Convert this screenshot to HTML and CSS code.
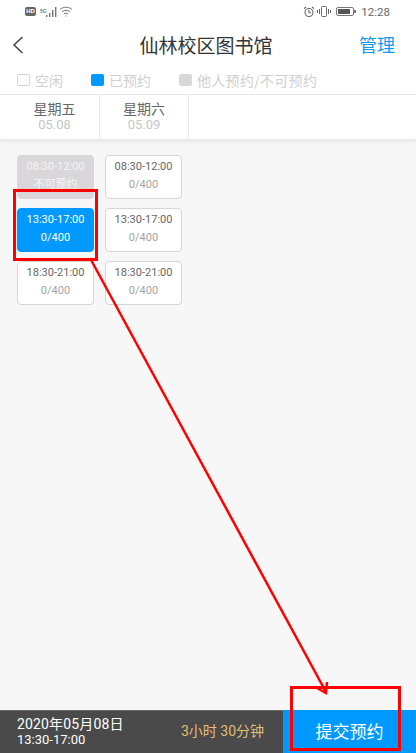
FILE: index.html
```html
<!DOCTYPE html>
<html lang="en">
<head>
<meta charset="utf-8">
<meta name="viewport" content="width=device-width,initial-scale=1">
<title>仙林校区图书馆</title>
<link rel="stylesheet" href="styles.css">
</head>
<body>
<div class="phone">

  <!-- status bar -->
  <div class="status">
    <div class="status-left">
      <span class="hd">HD</span>
      <span class="net">5G</span>
      <svg width="12" height="10" viewBox="0 0 12 10"><path d="M1 8h1.400v2H1zM4 6h1.400v4H4zM7 3h1.400v7H7zM10 0h1.400v10H10z" fill="#777"/></svg>
      <svg class="wifi" width="14" height="11" viewBox="0 0 14 11" fill="none" stroke="#777" stroke-width="1"><path d="M1 3.500C4.500 .5 9.500 .5 13 3.500M3 5.700C5.500 3.800 8.500 3.800 11 5.700M5 7.800C6.200 6.900 7.800 6.900 9 7.800M6.500 10h1"/></svg>
    </div>
    <div class="status-right">
      <svg class="alarm" width="12" height="12" viewBox="0 0 12 12" fill="none" stroke="#666" stroke-width="1.100"><circle cx="6" cy="6.500" r="4"/><path d="M6 4v2.700h2M1 2.600L3 1M11 2.600L9 1"/></svg>
      <svg width="14" height="11" viewBox="0 0 14 11" fill="none" stroke="#666"><rect x="4.500" y=".5" width="5" height="10" rx="1"/><path d="M2.500 3v5M.5 4v3M11.500 3v5M13.500 4v3"/></svg>
      <span class="battery"><i></i></span>
      <span class="clock">12:28</span>
    </div>
  </div>

  <!-- title bar -->
  <div class="nav">
    <svg class="back" width="12" height="18" viewBox="0 0 12 18" fill="none" stroke="#444" stroke-width="1.500"><path d="M10.500 1L2 9l8.500 8"/></svg>
    <h1>仙林校区图书馆</h1>
    <a class="manage">管理</a>
  </div>

  <!-- legend -->
  <div class="legend">
    <span class="key"><i class="box free"></i>空闲</span>
    <span class="key"><i class="box mine"></i>已预约</span>
    <span class="key"><i class="box taken"></i>他人预约/不可预约</span>
  </div>

  <!-- day tabs -->
  <div class="days">
    <div class="day"><b>星期五</b><small>05.08</small></div>
    <div class="day"><b>星期六</b><small>05.09</small></div>
  </div>

  <!-- time slots -->
  <div class="slots">
    <div class="col">
      <div class="slot off"><b>08:30-12:00</b><small>不可预约</small></div>
      <div class="slot on"><b>13:30-17:00</b><small>0/400</small></div>
      <div class="slot"><b>18:30-21:00</b><small>0/400</small></div>
    </div>
    <div class="col">
      <div class="slot"><b>08:30-12:00</b><small>0/400</small></div>
      <div class="slot"><b>13:30-17:00</b><small>0/400</small></div>
      <div class="slot"><b>18:30-21:00</b><small>0/400</small></div>
    </div>
  </div>

  <!-- bottom bar -->
  <div class="bottom">
    <div class="when">
      <span>2020年05月08日</span>
      <span>13:30-17:00</span>
    </div>
    <div class="length">3小时 30分钟</div>
    <div class="submit">提交预约</div>
  </div>

  <!-- red markup drawn on top of the screenshot -->
  <svg class="markup" width="416" height="753" viewBox="0 0 416 753" fill="none" stroke="#f00">
    <rect x="14.500" y="190.500" width="82" height="69" stroke-width="3"/>
    <rect x="291.500" y="687.500" width="108" height="62" stroke-width="3"/>
    <path d="M90 258L326 692" stroke-width="2.500"/>
    <path d="M317 688L326 693L327 682" stroke-width="2.500"/>
  </svg>
</div>
</body>
</html>
```

FILE: styles.css
```css
*{box-sizing:border-box}
html,body{margin:0;padding:0}
body{font-family:"Noto Sans CJK SC","Roboto",sans-serif;background:#fff}
.phone{position:relative;width:416px;height:753px;display:flex;flex-direction:column;overflow:hidden;background:#f7f7f7}

/* status bar */
.status{height:23px;flex:none;display:flex;justify-content:space-between;align-items:center;padding:0 26px 0 25px;background:#fff;color:#666}
.status-left,.status-right{display:flex;align-items:center}
.status-left{gap:3px}
.status-right{gap:4px}
.alarm{margin-right:-2px}
.hd{width:11px;height:9px;border-radius:2px;background:#666;color:#fff;font:bold 6px/9px "Liberation Sans",sans-serif;text-align:center}
.net{font:bold 5px/10px "Liberation Sans",sans-serif;color:#777;align-self:flex-start;margin:0 -5px 0 1px}
.wifi{margin-left:-1px}
.battery{position:relative;width:18px;height:9px;border:1px solid #777;border-radius:2px;padding:1px;margin:0 3px 0 1px}
.battery i{display:block;width:12px;height:5px;background:#555}
.battery:after{content:"";position:absolute;right:-3px;top:2px;width:2px;height:3px;background:#777}
.clock{font:11.500px "Roboto",sans-serif;color:#666}

/* title bar */
.nav{height:43px;flex:none;display:flex;align-items:center;justify-content:center;position:relative;background:#fff;padding-right:4px}
.nav h1{margin:0;font-size:19px;font-weight:400;color:#333;line-height:43px}
.back{position:absolute;left:12px;top:13px}
.manage{position:absolute;right:21px;top:0;font-size:18px;line-height:43px;color:#0d9bf2}

/* legend */
.legend{height:29px;flex:none;display:flex;align-items:center;padding-left:17px;background:#fff;border-bottom:1px solid #e8e8e8;color:#cfcfcf;font-size:14px}
.key{display:flex;align-items:center;gap:5px;margin-right:28px}
.box{width:13px;height:12px;border-radius:2px}
.free{background:#fff;border:1px solid #d4d4d4}
.mine{background:#0099ff}
.taken{background:#d9d7da}
.key:last-child{letter-spacing:.3px}

/* day tabs */
.days{height:44px;flex:none;display:flex;background:#fff;box-shadow:0 4px 3px -1px #ebe9eb}
.day{width:89px;display:flex;flex-direction:column;align-items:center;border-right:1px solid #e8e8e8;padding-top:5px}
.day:first-child{width:100px;padding-left:10px}
.day b{font-weight:400;font-size:14px;line-height:17px;color:#666}
.day small{font:13px/15px "Roboto",sans-serif;color:#c6c6c6}

/* time slots */
.slots{flex:1;display:flex;gap:11px;padding:16px 17px 0}
.col{display:flex;flex-direction:column;gap:9px}
.slot{width:77px;height:44px;border:1px solid #d6d6d6;border-radius:4px;background:#fff;display:flex;flex-direction:column;align-items:center;padding-top:3px}
.slot b{font:400 11px/15px "Roboto",sans-serif;color:#666;margin-bottom:3px}
.slot small{font:11px/15px "Roboto","Noto Sans CJK SC",sans-serif;color:#a3a3a3}
.slot.off{background:#d9d7da;border-color:#d9d7da}
.slot.off b,.slot.off small{color:#f4f4f4}
.slot.on{background:#0099ff;border-color:#0099ff}
.slot.on b,.slot.on small{color:#fff}

/* bottom bar */
.bottom{height:43px;flex:none;display:flex;align-items:stretch;background:#4a4a4a;border-top:1px solid #666}
.when{width:181px;padding:6px 0 0 17px;display:flex;flex-direction:column;color:#fff;font:14px/15px "Roboto","Noto Sans CJK SC",sans-serif;letter-spacing:.15px}
.when span:last-child{font-size:13px;letter-spacing:0}
.length{width:102px;color:#e2bf73;font:14px/40px "Roboto","Noto Sans CJK SC",sans-serif;white-space:nowrap}
.submit{flex:1;background:#0099ff;color:#fff;font-size:17px;line-height:40px;text-align:center;margin-top:-1px;padding-top:1px}

.markup{position:absolute;left:0;top:0}
```
